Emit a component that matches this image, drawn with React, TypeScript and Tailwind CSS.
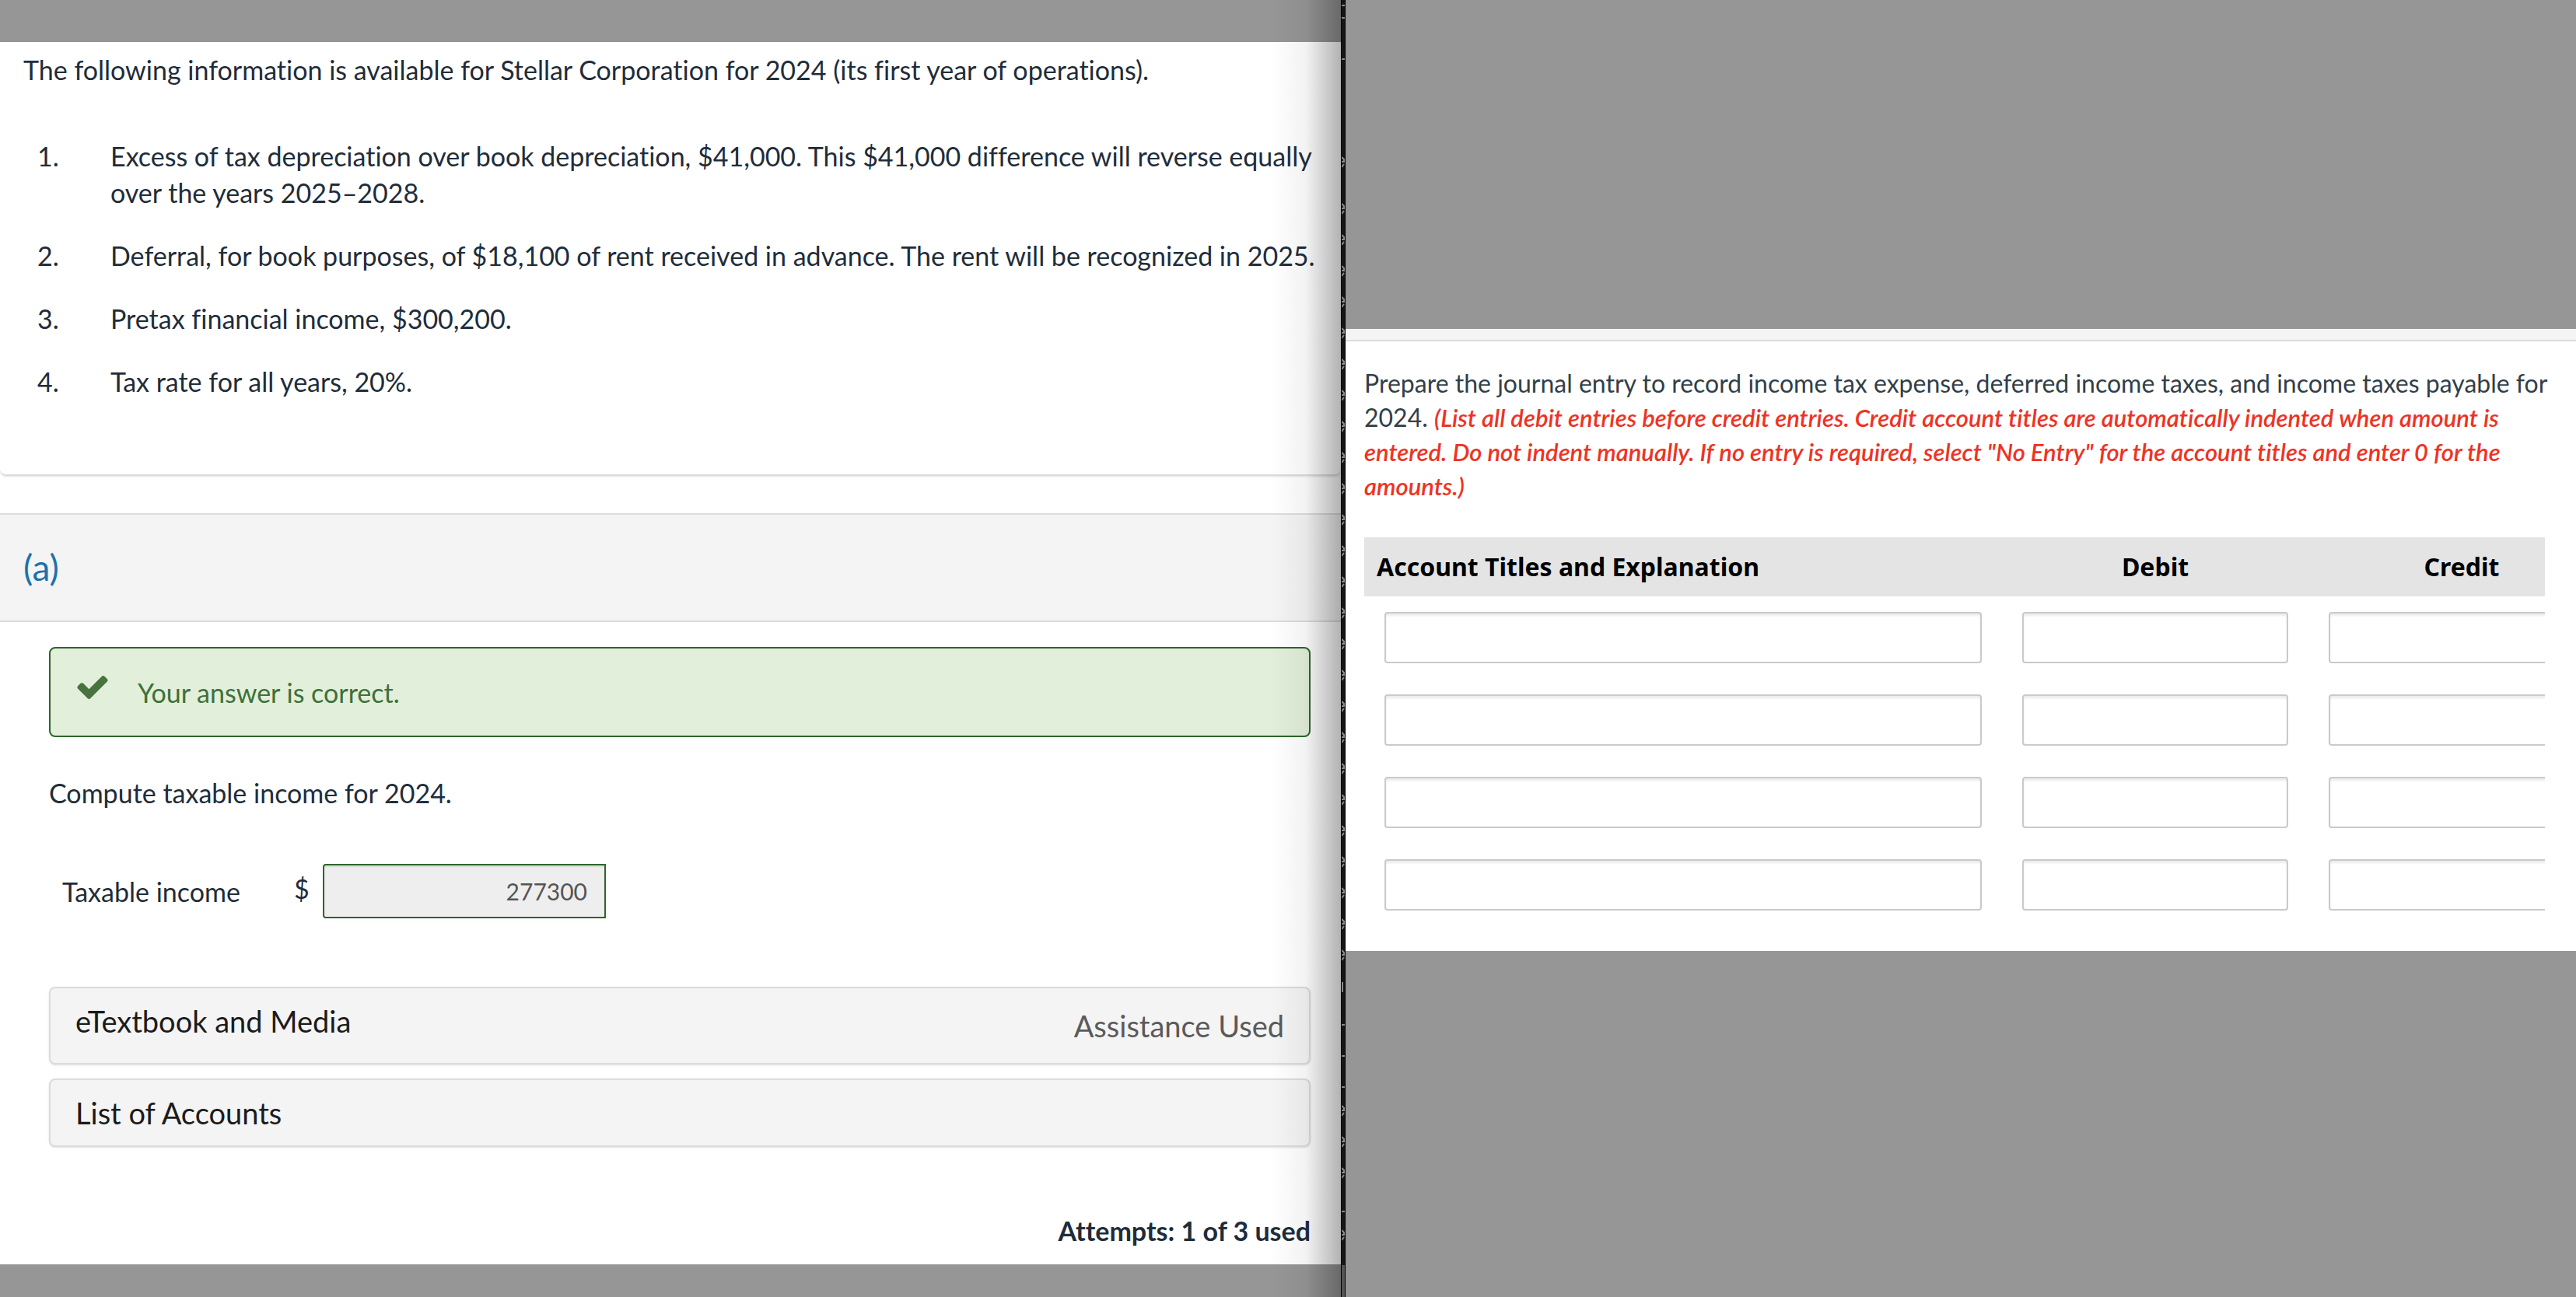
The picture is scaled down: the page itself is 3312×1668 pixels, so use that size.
import { useState } from "react";

const facts = [
  "Excess of tax depreciation over book depreciation, $41,000. This $41,000 difference will reverse equally over the years 2025–2028.",
  "Deferral, for book purposes, of $18,100 of rent received in advance. The rent will be recognized in 2025.",
  "Pretax financial income, $300,200.",
  "Tax rate for all years, 20%.",
];

type Entry = { account: string; debit: string; credit: string };
const emptyEntry: Entry = { account: "", debit: "", credit: "" };

// small marks of the dark sidebar that still show between the two windows
const chevrons = [
  208, 268, 308, 348, 388, 428, 468, 508, 548, 588, 628, 668, 708, 748, 788, 828,
  868, 908, 948, 988, 1028, 1068, 1108, 1148, 1188, 1228, 1428, 1468, 1508, 1588,
];
const dashes = [7, 23, 76, 1318, 1358, 1398, 1558];

function CheckIcon() {
  return (
    <svg viewBox="0 0 1550 1188" className="mb-3 h-[30px] w-[40px] shrink-0" fill="#48733f" aria-hidden>
      <path d="M1550 232q0 40-28 68l-724 724-136 136q-28 28-68 28t-68-28l-136-136-362-362q-28-28-28-68t28-68l136-136q28-28 68-28t68 28l294 295 656-657q28-28 68-28t68 28l136 136q28 28 28 68z" />
    </svg>
  );
}

function Gutter() {
  return (
    <div className="relative w-[6px] shrink-0 overflow-hidden border-x border-black bg-[#171614]" aria-hidden>
      <svg className="absolute top-0 left-0" width="4" height="1668" fill="none" stroke="#8a8a8a" strokeWidth="2">
        {chevrons.map((y) => (
          <path key={y} d={`M0 ${y - 6}l3 3v3h-3M0 ${y + 7}l3-4`} />
        ))}
        {dashes.map((y) => (
          <path key={y} d={`M0 ${y}h4`} />
        ))}
        <path d="M1 1263v13" />
        <path d="M2 1627v41" stroke="#555" strokeWidth="4" />
      </svg>
    </div>
  );
}

function QuestionWindow() {
  return (
    <section className="relative min-w-0 flex-[1724] overflow-hidden bg-[#969696] pt-[54px]">
      <div className="bg-white pb-5 text-[#1f2d3a]">
        <div className="rounded-b-lg border-b-2 border-[#dcdcdc] pr-[30px] pb-24 pl-[30px] shadow-sm">
          <p className="pt-3 text-[34px] leading-[47px]">
            The following information is available for Stellar Corporation for 2024 (its first year of operations).
          </p>
          <ol className="mt-16 flex flex-col gap-[34px] text-[34px] leading-[47px]">
            {facts.map((fact, i) => (
              <li key={fact} className="flex">
                <span className="w-[112px] shrink-0 pl-[18px]">{i + 1}.</span>
                <span>{fact}</span>
              </li>
            ))}
          </ol>
        </div>

        <div className="mt-12 border-y-2 border-[#dcdcdc] bg-[#f4f4f4] px-[30px] py-[41px]">
          <h2 className="text-[46px] leading-[54px] text-[#1d71ab]">(a)</h2>
        </div>

        <div className="pt-8 pr-[39px] pl-[63px]">
          <div className="flex h-[116px] items-center rounded-lg border-2 border-[#2c672a] bg-[#e2efda] pl-[34px] text-[#3d713a]">
            <CheckIcon />
            <p className="pl-[38px] text-[34px] leading-[47px]">Your answer is correct.</p>
          </div>

          <p className="mt-12 text-[34px] leading-[47px]">Compute taxable income for 2024.</p>

          <div className="mt-[68px] flex items-center text-[34px] leading-[47px]">
            <label htmlFor="taxable-income" className="w-[315px] pl-[17px]">
              Taxable income
            </label>
            <span className="w-[37px] pb-2">$</span>
            <input
              id="taxable-income"
              readOnly
              value="277300"
              className="h-[70px] w-[364px] rounded-l-sm border-2 border-[#2c672a] bg-[#eeeeee] px-[22px] text-right text-[30px] text-[#555] shadow-[inset_0_2px_2px_rgba(0,0,0,0.08)]"
            />
          </div>

          <div className="mt-[88px] flex flex-col gap-[18px] text-[38px] leading-[52px] text-[#1b1b1b]">
            <button
              type="button"
              className="flex h-[100px] justify-between rounded-lg border-2 border-[#dcdcdc] bg-[#f4f4f4] px-8 pt-4 text-left shadow-sm"
            >
              <span>eTextbook and Media</span>
              <span className="pt-[6px] text-[#5a5a5a]">Assistance Used</span>
            </button>
            <button
              type="button"
              className="h-[88px] rounded-lg border-2 border-[#dcdcdc] bg-[#f4f4f4] px-8 text-left shadow-sm"
            >
              List of Accounts
            </button>
          </div>

          <p className="mt-[84px] text-right text-[34px] leading-[47px] font-bold">Attempts: 1 of 3 used</p>
        </div>
      </div>
      {/* shade cast by the window on the right */}
      <div className="pointer-events-none absolute inset-y-0 right-0 w-[90px] bg-linear-to-l from-black/30 via-black/5 to-transparent" />
    </section>
  );
}

function JournalWindow() {
  const [entries, setEntries] = useState<Entry[]>(() => Array.from({ length: 4 }, () => ({ ...emptyEntry })));

  const update = (row: number, field: keyof Entry, value: string) =>
    setEntries((list) => list.map((e, i) => (i === row ? { ...e, [field]: value } : e)));

  const inputClass =
    "block h-[66px] w-full rounded-sm border-2 border-[#cacaca] bg-white px-4 text-[32px] shadow-[inset_0_3px_3px_rgba(0,0,0,0.08)]";

  return (
    <section className="min-w-0 flex-[1582] bg-[#969696] pt-[423px]">
      <div className="border-t-[14px] border-[#f4f4f4] bg-white">
        <div className="border-t-2 border-[#dcdcdc] pt-8 pr-[40px] pb-8 pl-6">
          <p className="-mr-4 text-[32px] leading-[44px] text-[#323f49]">
            Prepare the journal entry to record income tax expense, deferred income taxes, and income taxes payable for
            2024.{" "}
            <em className="text-[31px] font-semibold text-[#ee3324]">
              (List all debit entries before credit entries. Credit account titles are automatically indented when
              amount is entered. Do not indent manually. If no entry is required, select "No Entry" for the account
              titles and enter 0 for the amounts.)
            </em>
          </p>

          <div className="mt-11 overflow-hidden">
            <table className="w-[calc(100%+90px)] table-fixed border-collapse">
              <colgroup>
                <col className="w-[820px]" />
                <col className="w-[394px]" />
                <col className="w-[394px]" />
              </colgroup>
              <thead>
                <tr className="h-[76px] bg-[#e4e4e4] font-['Noto_Sans'] text-[32px] leading-[40px] text-black">
                  <th className="pl-4 text-left">Account Titles and Explanation</th>
                  <th>Debit</th>
                  <th>Credit</th>
                </tr>
              </thead>
              <tbody>
                {entries.map((entry, i) => (
                  <tr key={i}>
                    {(["account", "debit", "credit"] as const).map((field) => (
                      <td key={field} className="px-[26px] pt-5 pb-5">
                        <input
                          aria-label={`${field} ${i + 1}`}
                          value={entry[field]}
                          onChange={(e) => update(i, field, e.target.value)}
                          className={inputClass}
                        />
                      </td>
                    ))}
                  </tr>
                ))}
              </tbody>
            </table>
          </div>
        </div>
      </div>
    </section>
  );
}

export default function App() {
  return (
    <main className="flex min-h-screen w-full font-[Lato,sans-serif] [font-variant-ligatures:none]">
      <QuestionWindow />
      <Gutter />
      <JournalWindow />
    </main>
  );
}
